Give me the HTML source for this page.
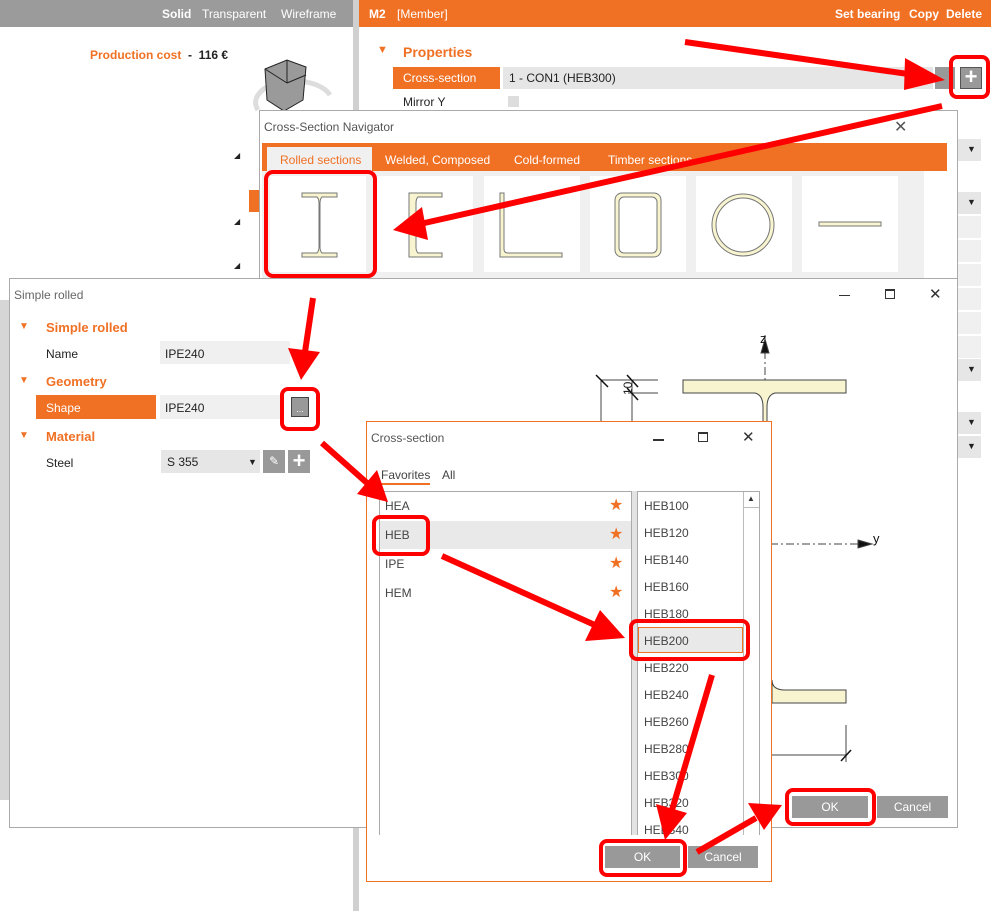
<!DOCTYPE html>
<html><head><meta charset="utf-8"><style>
*{margin:0;padding:0;box-sizing:border-box}
body{width:991px;height:911px;position:relative;overflow:hidden;background:#fff;font-family:"Liberation Sans",sans-serif;font-size:12px;color:#222}
.a{position:absolute}
.t{position:absolute;white-space:nowrap}
.or{color:#f07024}
.gb{background:#e6e6e6}
.btn{position:absolute;background:#999;color:#fff;text-align:center;line-height:22px;font-size:12px}
.star{position:absolute;color:#f07024;font-size:16px;line-height:16px}
.li{position:absolute;left:644px;color:#444;font-size:12px}
</style></head><body>
<!-- top bars -->
<div class="a" style="left:0;top:0;width:353px;height:27px;background:#9b9b9b"></div>
<div class="t" style="left:162px;top:7px;color:#fff;font-weight:bold">Solid</div>
<div class="t" style="left:202px;top:7px;color:#fff">Transparent</div>
<div class="t" style="left:281px;top:7px;color:#fff">Wireframe</div>
<div class="a" style="left:353px;top:0;width:6px;height:911px;background:#d0d0d0"></div>
<div class="a" style="left:359px;top:0;width:632px;height:27px;background:#f07024"></div>
<div class="t" style="left:369px;top:7px;color:#fff;font-weight:bold">M2</div>
<div class="t" style="left:397px;top:7px;color:#fff">[Member]</div>
<div class="t" style="left:835px;top:7px;color:#fff;font-weight:bold">Set bearing</div>
<div class="t" style="left:909px;top:7px;color:#fff;font-weight:bold">Copy</div>
<div class="t" style="left:946px;top:7px;color:#fff;font-weight:bold">Delete</div>
<!-- left viewport -->
<div class="t" style="left:90px;top:48px;font-weight:bold"><span class="or">Production cost</span> &nbsp;-&nbsp; 116 €</div>
<svg class="a" style="left:250px;top:55px" width="90" height="60"><path d="M8,55 A32,18 0 0 1 80,40" fill="none" stroke="#ddd" stroke-width="5"/><polygon points="15,14 37,5 56,12 53,45 34,56 17,45" fill="#9a9a9a" stroke="#222"/><line x1="37" y1="5" x2="37" y2="28" stroke="#222"/><line x1="37" y1="28" x2="56" y2="20" stroke="#222"/><line x1="15" y1="14" x2="37" y2="28" stroke="#222"/></svg>
<div class="t" style="left:234px;top:151px;font-size:8px">◢</div>
<div class="t" style="left:234px;top:217px;font-size:8px">◢</div>
<div class="t" style="left:234px;top:261px;font-size:8px">◢</div>
<div class="a" style="left:249px;top:190px;width:10px;height:22px;background:#f07024"></div>
<div class="a" style="left:0;top:300px;width:9px;height:500px;background:#d6d6d6"></div>
<!-- right panel -->
<div class="t" style="left:377px;top:44px;color:#f07024;font-size:11px">▼</div>
<div class="t or" style="left:403px;top:44px;font-size:14px;font-weight:bold">Properties</div>
<div class="a" style="left:393px;top:67px;width:107px;height:22px;background:#f07024"></div>
<div class="t" style="left:403px;top:71px;color:#fff">Cross-section</div>
<div class="a gb" style="left:503px;top:67px;width:430px;height:22px"></div>
<div class="t" style="left:509px;top:71px">1 - CON1 (HEB300)</div>
<div class="a" style="left:935px;top:67px;width:20px;height:22px;background:#999"></div>
<div class="a" style="left:960px;top:67px;width:22px;height:22px;background:#999;border:1px solid #555;color:#fff;font-size:22px;line-height:18px;text-align:center;font-weight:bold">+</div>
<div class="t" style="left:403px;top:95px">Mirror Y</div>
<div class="a" style="left:508px;top:96px;width:11px;height:11px;background:#ddd"></div>
<div class="a gb" style="left:924px;top:139px;width:57px;height:22px"></div><div class="t" style="left:967px;top:144px;font-size:9px">▼</div>
<div class="a gb" style="left:924px;top:192px;width:57px;height:22px"></div><div class="t" style="left:967px;top:197px;font-size:9px">▼</div>
<div class="a" style="left:924px;top:216px;width:57px;height:22px;background:#f0f0f0"></div>
<div class="a" style="left:924px;top:240px;width:57px;height:22px;background:#f0f0f0"></div>
<div class="a" style="left:924px;top:264px;width:57px;height:22px;background:#f0f0f0"></div>
<div class="a" style="left:958px;top:288px;width:23px;height:22px;background:#f0f0f0"></div>
<div class="a" style="left:958px;top:312px;width:23px;height:22px;background:#f0f0f0"></div>
<div class="a" style="left:958px;top:336px;width:23px;height:22px;background:#f0f0f0"></div>
<div class="a gb" style="left:958px;top:359px;width:23px;height:22px"></div><div class="t" style="left:967px;top:364px;font-size:9px">▼</div>
<div class="a gb" style="left:958px;top:412px;width:23px;height:22px"></div><div class="t" style="left:967px;top:417px;font-size:9px">▼</div>
<div class="a gb" style="left:958px;top:436px;width:23px;height:22px"></div><div class="t" style="left:967px;top:441px;font-size:9px">▼</div>
<!-- navigator -->
<div class="a" style="left:259px;top:110px;width:699px;height:170px;background:#fff;border:1px solid #aaa"></div>
<div class="t" style="left:264px;top:120px;color:#555">Cross-Section Navigator</div>
<div class="t" style="left:894px;top:117px;color:#555;font-size:16px">✕</div>
<div class="a" style="left:262px;top:143px;width:685px;height:28px;background:#f07024"></div>
<div class="a" style="left:267px;top:147px;width:105px;height:24px;background:#f0f0f0"></div>
<div class="t or" style="left:280px;top:153px">Rolled sections</div>
<div class="t" style="left:385px;top:153px;color:#fff">Welded, Composed</div>
<div class="t" style="left:514px;top:153px;color:#fff">Cold-formed</div>
<div class="t" style="left:608px;top:153px;color:#fff">Timber sections</div>
<div class="a" style="left:262px;top:171px;width:662px;height:107px;background:#f0f0f0"></div>
<div class="a" style="left:270px;top:176px;width:96px;height:96px;background:#fff"></div>
<div class="a" style="left:377px;top:176px;width:96px;height:96px;background:#fff"></div>
<div class="a" style="left:484px;top:176px;width:96px;height:96px;background:#fff"></div>
<div class="a" style="left:590px;top:176px;width:96px;height:96px;background:#fff"></div>
<div class="a" style="left:696px;top:176px;width:96px;height:96px;background:#fff"></div>
<div class="a" style="left:802px;top:176px;width:96px;height:96px;background:#fff"></div>
<svg class="a" style="left:262px;top:171px" width="662" height="107" fill="#f7f4cf" stroke="#777" stroke-width="1">
<path d="M40,22H75V26H60Q58,28 58,32V76Q58,80 60,82H75V86H40V82H55Q57,80 57,76V32Q57,28 55,26H40Z"/>
<path d="M147,22H180V26H156Q154,28 154,32V76Q154,80 156,82H180V86H147Z"/>
<path d="M238,22H242V78Q242,82 246,82H300V86H238Z"/>
<rect x="353" y="22" width="46" height="64" rx="7"/><rect x="357" y="26" width="38" height="56" rx="5" fill="#fff"/>
<circle cx="481" cy="54" r="31"/><circle cx="481" cy="54" r="27" fill="#fff"/>
<rect x="557" y="51" width="62" height="4"/>
</svg>
<!-- simple rolled -->
<div class="a" style="left:9px;top:278px;width:949px;height:550px;background:#fff;border:1px solid #aaa"></div>
<div class="t" style="left:14px;top:288px;color:#666">Simple rolled</div>
<div class="a" style="left:839px;top:295px;width:11px;height:1px;background:#333"></div>
<div class="a" style="left:885px;top:289px;width:10px;height:10px;border:1px solid #333;border-top-width:2px"></div>
<div class="t" style="left:929px;top:285px;color:#333;font-size:15px">✕</div>
<div class="t" style="left:19px;top:321px;color:#f07024;font-size:10px">▼</div>
<div class="t or" style="left:46px;top:320px;font-size:13px;font-weight:bold">Simple rolled</div>
<div class="t" style="left:46px;top:347px">Name</div>
<div class="a" style="left:160px;top:341px;width:130px;height:23px;background:#f0f0f0"></div>
<div class="t" style="left:165px;top:347px">IPE240</div>
<div class="t" style="left:19px;top:375px;color:#f07024;font-size:10px">▼</div>
<div class="t or" style="left:46px;top:374px;font-size:13px;font-weight:bold">Geometry</div>
<div class="a" style="left:36px;top:395px;width:120px;height:24px;background:#f07024"></div>
<div class="t" style="left:46px;top:401px;color:#fff">Shape</div>
<div class="a" style="left:160px;top:395px;width:120px;height:24px;background:#f0f0f0"></div>
<div class="t" style="left:165px;top:401px">IPE240</div>
<div class="a" style="left:291px;top:397px;width:18px;height:20px;background:#999;border:1px solid #444;color:#fff;font-size:9px;text-align:center;line-height:22px">...</div>
<div class="t" style="left:19px;top:430px;color:#f07024;font-size:10px">▼</div>
<div class="t or" style="left:46px;top:429px;font-size:13px;font-weight:bold">Material</div>
<div class="t" style="left:46px;top:456px">Steel</div>
<div class="a" style="left:161px;top:450px;width:99px;height:23px;background:#e6e6e6"></div>
<div class="t" style="left:167px;top:455px">S 355</div>
<div class="t" style="left:248px;top:457px;font-size:9px">▼</div>
<div class="a" style="left:263px;top:450px;width:22px;height:23px;background:#999;color:#fff;text-align:center;line-height:23px">✎</div>
<div class="a" style="left:288px;top:450px;width:22px;height:23px;background:#999;color:#fff;text-align:center;font-size:22px;line-height:22px;font-weight:bold">+</div>
<!-- drawing -->
<svg class="a" style="left:580px;top:325px" width="300" height="440" stroke="#444" fill="none">
<line x1="185" y1="10" x2="185" y2="230" stroke-dasharray="8,3,2,3"/>
<polygon points="181,28 185,14 189,28" fill="#111"/>
<text x="180" y="18" fill="#111" stroke="none" font-size="13" font-family="Liberation Sans">z</text>
<line x1="190" y1="219" x2="285" y2="219" stroke-dasharray="8,3,2,3"/>
<polygon points="278,215 292,219 278,223" fill="#111"/>
<text x="293" y="218" fill="#111" stroke="none" font-size="13" font-family="Liberation Sans">y</text>
<path d="M103,55H266V68H195Q187,70 187,82V110H183V82Q183,70 175,68H103Z" fill="#f7f4cf"/>
<path d="M192,355Q192,365 205,365H266V378H192Z" fill="#f7f4cf"/>
<line x1="21" y1="55" x2="21" y2="110"/><line x1="52" y1="55" x2="52" y2="110"/>
<line x1="21" y1="55" x2="78" y2="55"/><line x1="48" y1="68" x2="78" y2="68"/>
<line x1="16" y1="50" x2="28" y2="62" stroke="#111" stroke-width="1.5"/><line x1="47" y1="50" x2="58" y2="62" stroke="#111" stroke-width="1.5"/><line x1="47" y1="63" x2="58" y2="75" stroke="#111" stroke-width="1.5"/>
<text x="52" y="70" fill="#222" stroke="none" font-size="12" transform="rotate(-90 52 70)" font-family="Liberation Sans">10</text>
<line x1="266" y1="400" x2="266" y2="437"/><line x1="190" y1="430" x2="266" y2="430"/><line x1="261" y1="436" x2="271" y2="425" stroke="#111" stroke-width="1.5"/>
</svg>
<div class="btn" style="left:792px;top:796px;width:76px">OK</div>
<div class="btn" style="left:877px;top:796px;width:71px">Cancel</div>
<!-- cross-section dialog -->
<div class="a" style="left:366px;top:421px;width:406px;height:461px;background:#fff;border:1px solid #f07024"></div>
<div class="t" style="left:371px;top:431px;color:#555">Cross-section</div>
<div class="a" style="left:653px;top:439px;width:11px;height:2px;background:#333"></div>
<div class="a" style="left:698px;top:432px;width:10px;height:10px;border:1px solid #333;border-top-width:2px"></div>
<div class="t" style="left:742px;top:428px;color:#333;font-size:15px">✕</div>
<div class="t" style="left:381px;top:468px;color:#444">Favorites</div>
<div class="a" style="left:379px;top:483px;width:51px;height:2px;background:#f07024"></div>
<div class="t" style="left:442px;top:468px;color:#444">All</div>
<div class="a" style="left:379px;top:491px;width:253px;height:344px;border:1px solid #aaa;border-bottom:none"></div>
<div class="a" style="left:380px;top:521px;width:251px;height:28px;background:#e9e9e9"></div>
<div class="t" style="left:385px;top:499px;color:#444">HEA</div>
<div class="t" style="left:385px;top:528px;color:#444">HEB</div>
<div class="t" style="left:385px;top:557px;color:#444">IPE</div>
<div class="t" style="left:385px;top:586px;color:#444">HEM</div>
<div class="star" style="left:609px;top:498px">★</div>
<div class="star" style="left:609px;top:527px">★</div>
<div class="star" style="left:609px;top:556px">★</div>
<div class="star" style="left:609px;top:585px">★</div>
<div class="a" style="left:632px;top:491px;width:5px;height:344px;background:#e3e3e3"></div>
<div class="a" style="left:637px;top:491px;width:123px;height:344px;border:1px solid #aaa;border-bottom:none"></div>
<div class="a" style="left:743px;top:492px;width:16px;height:343px;border-left:1px solid #bbb"></div>
<div class="a" style="left:743px;top:507px;width:16px;height:1px;background:#bbb"></div>
<div class="t" style="left:747px;top:494px;font-size:8px;color:#333">▲</div>
<div class="a" style="left:638px;top:627px;width:105px;height:26px;background:#e9e9e9;border:1px solid #f07024"></div>
<div class="li" style="top:499px">HEB100</div>
<div class="li" style="top:526px">HEB120</div>
<div class="li" style="top:553px">HEB140</div>
<div class="li" style="top:580px">HEB160</div>
<div class="li" style="top:607px">HEB180</div>
<div class="li" style="top:634px">HEB200</div>
<div class="li" style="top:661px">HEB220</div>
<div class="li" style="top:688px">HEB240</div>
<div class="li" style="top:715px">HEB260</div>
<div class="li" style="top:742px">HEB280</div>
<div class="li" style="top:769px">HEB300</div>
<div class="li" style="top:796px">HEB320</div>
<div class="li" style="top:823px">HEB340</div>
<div class="a" style="left:367px;top:835px;width:404px;height:46px;background:#fff"></div>
<div class="btn" style="left:605px;top:846px;width:75px">OK</div>
<div class="btn" style="left:688px;top:846px;width:70px">Cancel</div>
<!-- annotations -->
<svg class="a" style="left:0;top:0" width="991" height="911" fill="none" stroke="#f00" stroke-width="4">
<rect x="951" y="57" width="37" height="40" rx="6"/>
<rect x="266" y="172" width="109" height="104" rx="7"/>
<rect x="282" y="389" width="36" height="40" rx="6"/>
<rect x="374" y="517" width="54" height="37" rx="6"/>
<rect x="631" y="621" width="117" height="38" rx="6"/>
<rect x="601" y="841" width="84" height="34" rx="6"/>
<rect x="787" y="790" width="87" height="34" rx="6"/>
<g stroke-width="6" stroke-linecap="butt">
<line x1="685" y1="42" x2="915" y2="75"/>
<line x1="942" y1="106" x2="420" y2="224"/>
<line x1="313" y1="298" x2="305" y2="352"/>
<line x1="322" y1="443" x2="367" y2="483"/>
<line x1="442" y1="556" x2="597" y2="626"/>
<line x1="712" y1="675" x2="672" y2="810"/>
<line x1="697" y1="852" x2="756" y2="818"/>
</g>
<g fill="#f00" stroke="none">
<polygon points="945,80 905,58 904,90"/>
<polygon points="393,230 422,207 428,240"/>
<polygon points="301,380 288,348 320,352"/>
<polygon points="388,502 357,494 377,470"/>
<polygon points="625,638 585,641 600,610"/>
<polygon points="665,840 656,804 687,813"/>
<polygon points="782,805 748,803 764,830"/>
</g>
</svg>
</body></html>
